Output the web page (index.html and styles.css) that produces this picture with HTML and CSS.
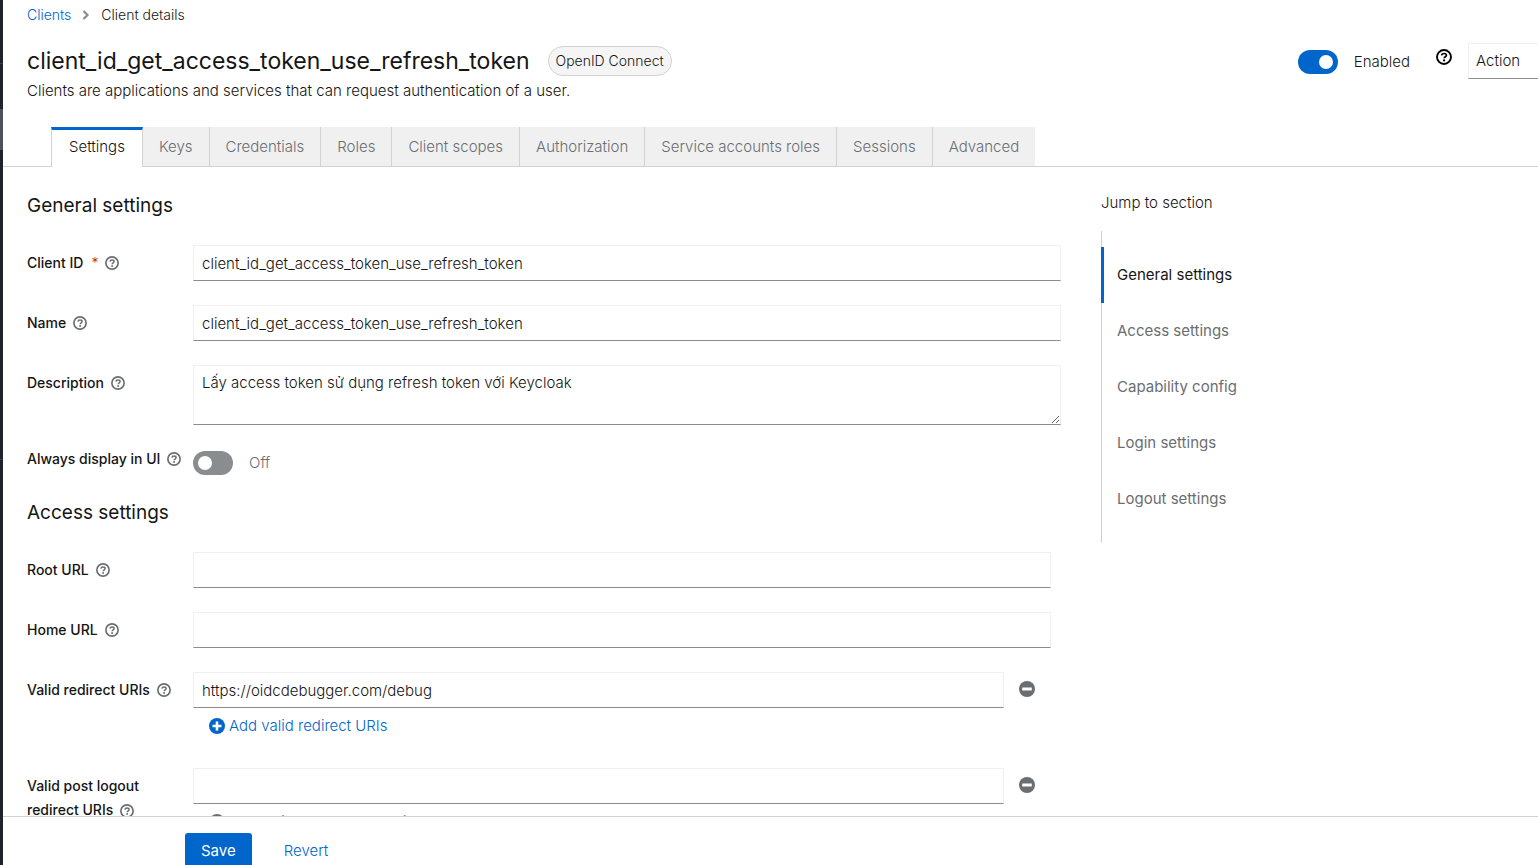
FILE: index.html
```html
<!DOCTYPE html>
<html lang="en">
<head>
<meta charset="utf-8">
<title>Client details</title>
<link rel="stylesheet" href="styles.css">
</head>
<body>
<svg class="sprite" aria-hidden="true">
  <symbol id="help" viewBox="0 0 16 16">
    <circle cx="8" cy="8" r="7" fill="none" stroke="currentColor" stroke-width="1.9"/>
    <path d="M5.6 6.4C5.8 5.1 6.8 4.5 8 4.5c1.4 0 2.4.8 2.4 1.9C10.400 7.800 8.200 7.700 8.200 9.300" fill="none" stroke="currentColor" stroke-width="1.7"/>
    <circle cx="8.100" cy="11.400" r="1.100" fill="currentColor"/>
  </symbol>
  <symbol id="minus" viewBox="0 0 16 16">
    <circle cx="8" cy="8" r="8" fill="currentColor"/>
    <rect x="3.200" y="6.500" width="9.600" height="3" rx=".5" fill="#fff"/>
  </symbol>
  <symbol id="plus" viewBox="0 0 16 16">
    <circle cx="8" cy="8" r="8" fill="currentColor"/>
    <path d="M8 3.500v9M3.500 8h9" stroke="#fff" stroke-width="2.600"/>
  </symbol>
</svg>
<div class="app">
  <div class="rail"><span class="rail-line"></span><span class="rail-current"></span><span class="rail-line"></span></div>
  <main class="main">
    <nav class="breadcrumb" aria-label="Breadcrumb">
      <a href="#clients">Clients</a>
      <svg class="chevron" viewBox="0 0 8 10" aria-hidden="true"><path d="M1.500 1l4 4-4 4" fill="none" stroke="currentColor" stroke-width="2.200"/></svg>
      <span>Client details</span>
    </nav>
    <header class="header">
      <div class="header-text">
        <div class="title-row">
          <h1>client_id_get_access_token_use_refresh_token</h1>
          <span class="badge">OpenID Connect</span>
        </div>
        <p>Clients are applications and services that can request authentication of a user.</p>
      </div>
      <div class="header-tools">
        <label class="switch-label"><input class="switch" type="checkbox" role="switch" checked><span>Enabled</span></label>
        <button class="icon-button tool-help" aria-label="Help for enabled"><svg class="icon"><use href="#help"/></svg></button>
        <button class="action">Action</button>
      </div>
    </header>
    <div class="tabs" role="tablist">
      <button class="tab tab-active" role="tab" aria-selected="true">Settings</button>
      <button class="tab" role="tab">Keys</button>
      <button class="tab" role="tab">Credentials</button>
      <button class="tab" role="tab">Roles</button>
      <button class="tab" role="tab">Client scopes</button>
      <button class="tab" role="tab">Authorization</button>
      <button class="tab" role="tab">Service accounts roles</button>
      <button class="tab" role="tab">Sessions</button>
      <button class="tab" role="tab">Advanced</button>
    </div>
    <div class="content">
      <form class="form" id="client-form">
        <section class="section">
          <h2>General settings</h2>
          <div class="row">
            <div class="label"><label for="client-id">Client ID<span class="required">*</span></label><button type="button" class="icon-button" aria-label="Help for client ID"><svg class="icon-small"><use href="#help"/></svg></button></div>
            <input class="field" id="client-id" type="text" value="client_id_get_access_token_use_refresh_token">
          </div>
          <div class="row">
            <div class="label"><label for="name">Name</label><button type="button" class="icon-button" aria-label="Help for name"><svg class="icon-small"><use href="#help"/></svg></button></div>
            <input class="field" id="name" type="text" value="client_id_get_access_token_use_refresh_token">
          </div>
          <div class="row">
            <div class="label"><label for="description">Description</label><button type="button" class="icon-button" aria-label="Help for description"><svg class="icon-small"><use href="#help"/></svg></button></div>
            <textarea class="field area" id="description" spellcheck="false">Lấy access token sử dụng refresh token với Keycloak</textarea>
          </div>
          <div class="row row-switch">
            <div class="label label-top"><label for="always">Always display in UI</label><button type="button" class="icon-button" aria-label="Help for always display in UI"><svg class="icon-small"><use href="#help"/></svg></button></div>
            <label class="switch-label off"><input class="switch" id="always" type="checkbox" role="switch"><span>Off</span></label>
          </div>
        </section>
        <section class="section section-inset">
          <h2>Access settings</h2>
          <div class="row">
            <div class="label"><label for="root-url">Root URL</label><button type="button" class="icon-button" aria-label="Help for root URL"><svg class="icon-small"><use href="#help"/></svg></button></div>
            <input class="field" id="root-url" type="text">
          </div>
          <div class="row">
            <div class="label"><label for="home-url">Home URL</label><button type="button" class="icon-button" aria-label="Help for home URL"><svg class="icon-small"><use href="#help"/></svg></button></div>
            <input class="field" id="home-url" type="text">
          </div>
          <div class="row">
            <div class="label"><label for="redirect">Valid redirect URIs</label><button type="button" class="icon-button" aria-label="Help for valid redirect URIs"><svg class="icon-small"><use href="#help"/></svg></button></div>
            <div>
              <div class="uri"><input class="field" id="redirect" type="text" value="https://oidcdebugger.com/debug"><button type="button" class="icon-button remove" aria-label="Remove"><svg class="icon"><use href="#minus"/></svg></button></div>
              <button type="button" class="add"><svg class="icon"><use href="#plus"/></svg>Add valid redirect URIs</button>
            </div>
          </div>
          <div class="row">
            <div class="label label-wrap"><label for="logout">Valid post logout redirect URIs</label><button type="button" class="icon-button" aria-label="Help for valid post logout redirect URIs"><svg class="icon-small"><use href="#help"/></svg></button></div>
            <div>
              <div class="uri"><input class="field" id="logout" type="text"><button type="button" class="icon-button remove" aria-label="Remove"><svg class="icon"><use href="#minus"/></svg></button></div>
              <button type="button" class="add add-disabled" disabled><svg class="icon"><use href="#plus"/></svg>Add valid post logout redirect URIs</button>
            </div>
          </div>
        </section>
      </form>
      <nav class="jump" aria-label="Jump to section">
        <div class="jump-title">Jump to section</div>
        <ul>
          <li><a class="current" href="#general">General settings</a></li>
          <li><a href="#access">Access settings</a></li>
          <li><a href="#capability">Capability config</a></li>
          <li><a href="#login">Login settings</a></li>
          <li><a href="#logout-settings">Logout settings</a></li>
        </ul>
      </nav>
    </div>
    <footer class="footer">
      <button class="save" type="submit" form="client-form">Save</button>
      <button class="revert" type="button">Revert</button>
    </footer>
  </main>
</div>
</body>
</html>
```
FILE: styles.css
```css
* { box-sizing: border-box; }
body {
  margin: 0;
  overflow: hidden;
  font: 300 15px/24px Inter, "Liberation Sans", sans-serif;
  color: #151515;
  background: #fff;
}
button, input, textarea { font: inherit; color: inherit; }
button { padding: 0; border: 0; background: none; cursor: pointer; white-space: nowrap; }
a { color: #06c; text-decoration: none; }
h1, h2, p, ul { margin: 0; padding: 0; font-weight: 400; }
p { font-weight: 300; }
ul { list-style: none; }
.sprite { position: absolute; width: 0; height: 0; }
.app { display: flex; height: 100vh; }
.rail {
  flex: 0 0 3px;
  display: flex;
  flex-direction: column;
  padding-top: 63px;
  background: #212427;
}
.rail-line { height: 1px; background: #3c3f42; }
.rail-current { height: 41px; margin: 45px 0 309px; background: #4f5255; }
.main { flex: 1; min-width: 0; display: flex; flex-direction: column; }
.breadcrumb {
  display: flex;
  align-items: center;
  padding: 3px 24px 0;
  font-size: 14px;
}
.chevron { width: 8px; height: 10px; margin: 0 11px; color: #8a8d90; }
.header { display: flex; justify-content: space-between; padding-left: 24px; margin-top: 19px; }
.title-row { display: flex; align-items: center; gap: 18px; height: 30px; }
h1 { font-size: 23px; line-height: 30px; }
.header p { margin: 3px 0 24px; font-size: 15px; }
.badge {
  padding: 2px 7px;
  border: 1px solid #d2d2d2;
  border-radius: 16px;
  background: #f5f5f5;
  font-size: 14px;
}
.header-tools { display: flex; align-items: flex-start; }
.switch-label { display: flex; align-items: center; gap: 16px; }
.header-tools .switch-label { height: 32px; }
.switch {
  appearance: none;
  flex: none;
  display: flex;
  align-items: center;
  width: 40px;
  height: 24px;
  margin: 0;
  padding: 0 5px;
  border-radius: 12px;
  background: #8a8d90;
}
.switch::before { content: ""; width: 14px; height: 14px; border-radius: 50%; background: #fff; }
.switch:checked { justify-content: flex-end; background: #06c; }
.off { color: #6a6e73; }
.icon-button { display: inline-flex; color: #6a6e73; }
.icon { width: 16px; height: 16px; }
.icon-small { width: 14px; height: 14px; }
.tool-help { margin: 3px 16px 0 26px; color: #000; }
.action {
  width: 70px;
  height: 36px;
  padding-left: 7px;
  text-align: left;
  border: solid #f0f0f0;
  border-width: 1px 0 1px 1px;
  border-bottom-color: #8a8d90;
  margin-top: -3px;
}
.tabs { display: flex; padding-left: 48px; border-bottom: 1px solid #d2d2d2; }
.tab {
  height: 39px;
  padding: 0 16px;
  border-right: 1px solid #d2d2d2;
  background: #f0f0f0;
  color: #6a6e73;
}
.tab:last-child { border-right: 0; }
.tab-active {
  height: 40px;
  margin-bottom: -1px;
  padding: 0 17px 3px;
  border-top: 3px solid #06c;
  border-left: 1px solid #d2d2d2;
  background: #fff;
  color: #151515;
}
.content {
  flex: 1;
  min-height: 0;
  overflow: hidden;
  display: grid;
  grid-template-columns: minmax(0, 1fr) 437px;
  column-gap: 40px;
  align-items: start;
  padding: 26px 0 0 24px;
}
.form { display: grid; gap: 24px; }
.section { display: grid; gap: 24px; }
.section-inset { padding-right: 10px; }
h2 { font-size: 19px; line-height: 26px; margin-bottom: 2px; }
.row { display: grid; grid-template-columns: 150px minmax(0, 1fr); column-gap: 16px; align-items: start; }
.row-switch { height: 27px; }
.row-switch .switch-label { height: 27px; }
.label { display: flex; align-items: center; gap: 7px; padding-top: 6px; font-size: 14px; font-weight: 500; white-space: nowrap; }
.label-top { padding-top: 0; margin-top: -2px; }
.label-wrap { display: block; white-space: normal; }
.label-wrap label { margin-right: 7px; }
.label-wrap .icon-button { vertical-align: middle; }
.required { margin-left: 8px; color: #c9190b; font-weight: 300; }
.field {
  display: block;
  width: 100%;
  height: 36px;
  padding: 0 8px;
  border: 1px solid #f0f0f0;
  border-bottom-color: #8a8d90;
  border-radius: 0;
  background: #fff;
  outline: 0;
}
.area { height: 60px; padding-top: 5px; resize: vertical; }
.uri { display: flex; align-items: center; }
.remove { flex: none; padding: 0 16px 2px 15px; }
.add { display: flex; align-items: center; gap: 4px; height: 36px; padding-left: 16px; color: #06c; }
.add-disabled { color: #6a6e73; }
.jump { margin-top: -2px; }
.jump ul { margin-top: 16px; padding: 16px 0; border-left: 1px solid #d2d2d2; }
.jump a { display: block; margin-left: -1px; padding: 16px 0 16px 16px; color: #6a6e73; }
.jump .current { padding-left: 13px; border-left: 3px solid #06c; color: #151515; }
.footer {
  flex: 0 0 49px;
  display: flex;
  align-items: flex-start;
  gap: 32px;
  overflow: hidden;
  padding: 16px 0 0 182px;
  border-top: 1px solid #d2d2d2;
}
.save { height: 36px; padding: 0 16px; border-radius: 3px; background: #06c; color: #fff; font-weight: 400; }
.revert { height: 36px; color: #06c; }
```
